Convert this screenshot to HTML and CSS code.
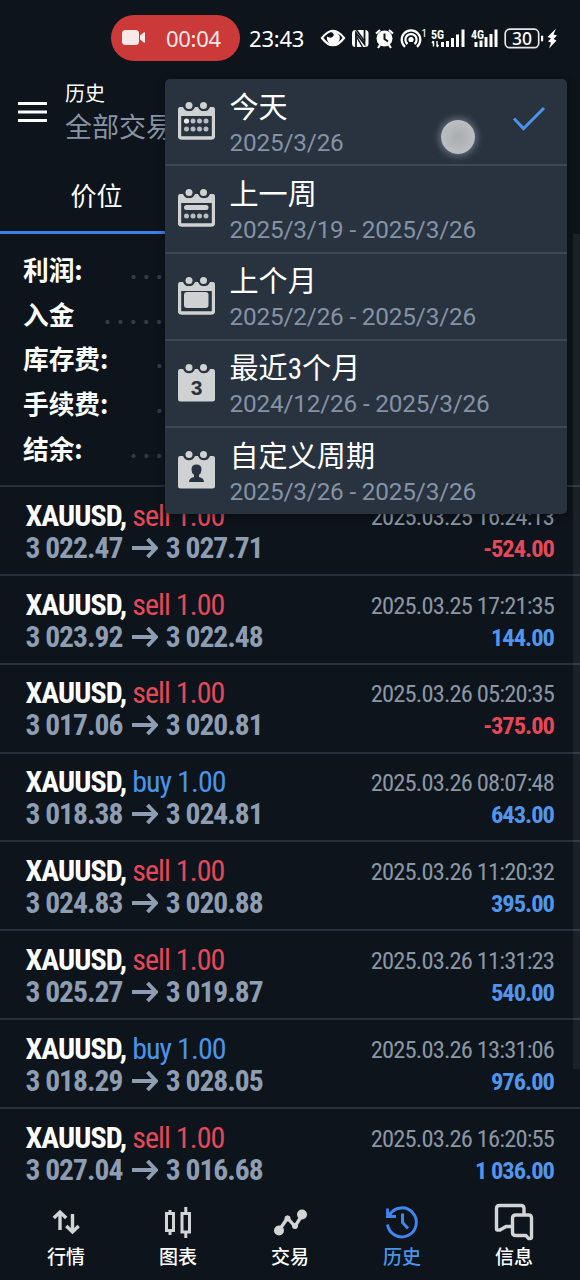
FILE: index.html
```
<!DOCTYPE html>
<html lang="zh-CN">
<head>
  <meta charset="UTF-8">
  <meta name="viewport" content="width=device-width, initial-scale=1.0">
  <title>历史</title>
  <link rel="stylesheet" href="styles.css">
</head>
<body>
  <svg class="defs" width="0" height="0">
    <symbol id="arrow" viewBox="0 0 26 20">
      <path d="M0 10H24M15.5 1L24 10L15.5 19" fill="none" stroke="currentColor" stroke-width="3.8"/>
    </symbol>
    <!-- calendar frame shared by the menu icons -->
    <symbol id="cal-top" viewBox="0 0 37 38">
      <path d="M2 5H5A6.4 6.4 0 0 0 17 5H20A6.4 6.4 0 0 0 32 5H35Q37 5 37 8V14H0V8Q0 5 2 5Z" fill="#d0d1d3"/>
      <circle cx="11" cy="3.6" r="3.5" fill="#d0d1d3"/>
      <circle cx="25.5" cy="3.6" r="3.5" fill="#d0d1d3"/>
    </symbol>
  </svg>

  <div class="screen">
    <div class="status">
      <div class="rec">
        <svg width="23" height="15" viewBox="0 0 23 15" fill="#fbe9e8"><rect width="17" height="15" rx="3.5"/><path d="M18 5.5L22 2.2Q23 2 23 3V12Q23 13 22 12.8L18 9.5Z"/></svg>
        <span>00:04</span>
      </div>
      <span class="clock">23:43</span>
      <svg class="tray" width="240" height="30" viewBox="0 0 240 30" fill="#fff">
        <!-- eye -->
        <path d="M2 15Q13 0.5 24 15Q13 29.5 2 15Z" fill="none" stroke="#fff" stroke-width="2.2"/>
        <path d="M13 8.5A6.5 6.5 0 1 1 7 13.5Q11 16 13.5 13Q14.5 10.5 11 9Z"/>
        <!-- nfc -->
        <rect x="32" y="7" width="16.5" height="17" rx="3.5"/>
        <path d="M36 24V10L44.5 21V7" fill="none" stroke="#0d141b" stroke-width="1.8"/>
        <path d="M36.5 7L44 17.500M36.500 13.500L42.500 24" stroke="#0d141b" stroke-width="1.5"/>
        <!-- alarm -->
        <circle cx="64.5" cy="15.5" r="8"/>
        <path d="M56 10.5L60 7M73 10.5L69 7M60 22L58 25M69 22L71 25" stroke="#fff" stroke-width="2.2"/>
        <path d="M64.5 10.5V16L68 18.5" fill="none" stroke="#0d141b" stroke-width="2"/>
        <!-- hotspot -->
        <circle cx="91" cy="16.500" r="2.6"/>
        <path d="M87.5 21A5.600 5.600 0 1 1 94.5 21M85 23.800A9.300 9.300 0 1 1 97 23.800" fill="none" stroke="#fff" stroke-width="2.3"/>
        <text class="t-small" x="101" y="14">1</text>
        <text class="t-net" x="111" y="16">5G</text>
        <path d="M113.5 18V23.5M112 20L113.5 18M117 18V23.5M118.5 22L117 24" fill="none" stroke="#fff" stroke-width="1.4"/>
        <path d="M122.5 24V19M127.5 24V18M132.5 24V15M137.5 24V11.5M143 24V6.5" stroke="#fff" stroke-width="3"/>
        <text class="t-net" x="151" y="16">4G</text>
        <path d="M156 24V19M161 24V17.5M166 24V14M171 24V11M176 24V6.5" stroke="#fff" stroke-width="3"/>
        <rect x="185.2" y="6.2" width="33.5" height="18.5" rx="4.5" fill="none" stroke="#e4e6e8" stroke-width="1.7"/>
        <rect x="221" y="12.5" width="2.2" height="6" rx="1"/>
        <text class="t-bat" x="202" y="21.5" text-anchor="middle">30</text>
        <path d="M236 5.5L227.5 14L231 15.2L228 18.5L231 19.5L229 25.5L236.5 17.5L233.5 16L237 12.5L233.5 11.5Z"/>
      </svg>
    </div>

    <div class="topbar">
      <svg width="29" height="20" viewBox="0 0 29 20"><path d="M0 1.5H29M0 10H29M0 18.5H29" stroke="#fff" stroke-width="3"/></svg>
      <div class="heading">
        <div class="title">历史</div>
        <div class="subtitle">全部交易品种</div>
      </div>
    </div>

    <div class="tabs">
      <div class="tab active">价位</div>
    </div>

    <div class="summary">
      <div class="sum"><b>利润:</b><i></i></div>
      <div class="sum short"><b>入金</b><i></i></div>
      <div class="sum long"><b>库存费:</b><i></i></div>
      <div class="sum long"><b>手续费:</b><i></i></div>
      <div class="sum"><b>结余:</b><i></i></div>
    </div>

    <div class="deals">
      <div class="deal">
        <div class="left">
          <div class="symbol"><b>XAUUSD,</b> <span class="sell">sell 1.00</span></div>
          <div class="price"><span>3 022.47</span><svg><use href="#arrow"/></svg><span>3 027.71</span></div>
        </div>
        <div class="right">
          <div class="date">2025.03.25 16:24:13</div>
          <div class="profit loss">-524.00</div>
        </div>
      </div>
      <div class="deal">
        <div class="left">
          <div class="symbol"><b>XAUUSD,</b> <span class="sell">sell 1.00</span></div>
          <div class="price"><span>3 023.92</span><svg><use href="#arrow"/></svg><span>3 022.48</span></div>
        </div>
        <div class="right">
          <div class="date">2025.03.25 17:21:35</div>
          <div class="profit">144.00</div>
        </div>
      </div>
      <div class="deal">
        <div class="left">
          <div class="symbol"><b>XAUUSD,</b> <span class="sell">sell 1.00</span></div>
          <div class="price"><span>3 017.06</span><svg><use href="#arrow"/></svg><span>3 020.81</span></div>
        </div>
        <div class="right">
          <div class="date">2025.03.26 05:20:35</div>
          <div class="profit loss">-375.00</div>
        </div>
      </div>
      <div class="deal">
        <div class="left">
          <div class="symbol"><b>XAUUSD,</b> <span class="buy">buy 1.00</span></div>
          <div class="price"><span>3 018.38</span><svg><use href="#arrow"/></svg><span>3 024.81</span></div>
        </div>
        <div class="right">
          <div class="date">2025.03.26 08:07:48</div>
          <div class="profit">643.00</div>
        </div>
      </div>
      <div class="deal">
        <div class="left">
          <div class="symbol"><b>XAUUSD,</b> <span class="sell">sell 1.00</span></div>
          <div class="price"><span>3 024.83</span><svg><use href="#arrow"/></svg><span>3 020.88</span></div>
        </div>
        <div class="right">
          <div class="date">2025.03.26 11:20:32</div>
          <div class="profit">395.00</div>
        </div>
      </div>
      <div class="deal">
        <div class="left">
          <div class="symbol"><b>XAUUSD,</b> <span class="sell">sell 1.00</span></div>
          <div class="price"><span>3 025.27</span><svg><use href="#arrow"/></svg><span>3 019.87</span></div>
        </div>
        <div class="right">
          <div class="date">2025.03.26 11:31:23</div>
          <div class="profit">540.00</div>
        </div>
      </div>
      <div class="deal">
        <div class="left">
          <div class="symbol"><b>XAUUSD,</b> <span class="buy">buy 1.00</span></div>
          <div class="price"><span>3 018.29</span><svg><use href="#arrow"/></svg><span>3 028.05</span></div>
        </div>
        <div class="right">
          <div class="date">2025.03.26 13:31:06</div>
          <div class="profit">976.00</div>
        </div>
      </div>
      <div class="deal">
        <div class="left">
          <div class="symbol"><b>XAUUSD,</b> <span class="sell">sell 1.00</span></div>
          <div class="price"><span>3 027.04</span><svg><use href="#arrow"/></svg><span>3 016.68</span></div>
        </div>
        <div class="right">
          <div class="date">2025.03.26 16:20:55</div>
          <div class="profit">1 036.00</div>
        </div>
      </div>
    </div>

    <div class="nav">
      <div class="nav-item">
        <svg width="40" height="40" viewBox="0 0 40 40" fill="none" stroke="#d3d4d6" stroke-width="3.4"><path d="M14 29V11.5M7.8 17L14 11L20.2 17M26.5 13V30.5M20.3 25L26.5 31L32.7 25"/></svg>
        <span>行情</span>
      </div>
      <div class="nav-item">
        <svg width="40" height="40" viewBox="0 0 40 40" fill="none" stroke="#d3d4d6" stroke-width="3"><path d="M8.5 12.5H15.5V29.5H8.5ZM12 9V13M12 29.5V34M24 12.5H31.5V31H24ZM27.8 6V13M27.8 31V37"/></svg>
        <span>图表</span>
      </div>
      <div class="nav-item">
        <svg width="40" height="40" viewBox="0 0 40 40"><path d="M9 29.5L17.5 17L25 25.5L32.5 13.5" fill="none" stroke="#d3d4d6" stroke-width="3.4"/><g fill="#d3d4d6"><circle cx="9" cy="29.5" r="5"/><circle cx="17.5" cy="17.5" r="3"/><circle cx="25" cy="25" r="3"/><circle cx="32" cy="13.5" r="5"/></g></svg>
        <span>交易</span>
      </div>
      <div class="nav-item active">
        <svg width="40" height="40" viewBox="0 0 40 40" fill="none" stroke="#3f86ef" stroke-width="3"><path d="M5.5 23.5A14.500 14.500 0 1 0 8 13M20.5 12.5V21.5L26 27.5"/><path d="M5.500 7.500V15.500H14" stroke-width="2.8"/><path d="M5 9L12 15.500H5Z" fill="#3f86ef" stroke="none"/></svg>
        <span>历史</span>
      </div>
      <div class="nav-item">
        <svg width="40" height="40" viewBox="0 0 40 40" fill="none" stroke="#d3d4d6" stroke-width="3.4" stroke-linejoin="round"><path d="M17 25.5H12L6 29H3.5Q2.5 29 2.5 27.5V7.5Q2.5 4.5 5.5 4.5H27Q30 4.5 30 7.5V14"/><path d="M22 14H34.5Q37.5 14 37.5 17V36Q37.5 37.5 36 37.5H34.5L32 34.5H22Q18.5 34.5 18.5 31.5V17Q18.5 14 22 14Z"/></svg>
        <span>信息</span>
      </div>
    </div>

    <div class="scrollbar"></div>

    <div class="menu">
      <div class="option">
        <svg class="cal" viewBox="0 0 37 38"><use href="#cal-top"/><path d="M1.5 11V34Q1.5 36 4 36H33Q35.5 36 35.5 34V11Z" fill="none" stroke="#d0d1d3" stroke-width="3.4"/><g fill="#b9bdc2"><circle cx="8.5" cy="19" r="2.6" fill="#e8e8e8"/><circle cx="15" cy="19" r="2.5"/><circle cx="21.5" cy="19" r="2.5"/><circle cx="28" cy="19" r="2.5"/><circle cx="8.5" cy="27" r="2.5"/><circle cx="15" cy="27" r="2.5"/><circle cx="21.5" cy="27" r="2.5"/><circle cx="28" cy="27" r="2.5"/></g></svg>
        <div>
          <div class="name">今天</div>
          <div class="range">2025/3/26</div>
        </div>
        <svg class="check" width="34" height="25" viewBox="0 0 34 25"><path d="M2 12.5L11.5 22.5L32 2" fill="none" stroke="#4b93ea" stroke-width="3"/></svg>
      </div>
      <div class="option">
        <svg class="cal" viewBox="0 0 37 38"><use href="#cal-top"/><path d="M1.5 11V34Q1.5 36 4 36H33Q35.5 36 35.5 34V11Z" fill="none" stroke="#d0d1d3" stroke-width="3.4"/><rect x="6" y="16" width="24.5" height="5" rx="2.5" fill="#d0d1d3"/><g fill="#b9bdc2"><circle cx="8.5" cy="27" r="2.5"/><circle cx="15" cy="27" r="2.5"/><circle cx="21.5" cy="27" r="2.5"/><circle cx="28" cy="27" r="2.5"/></g></svg>
        <div>
          <div class="name">上一周</div>
          <div class="range">2025/3/19 - 2025/3/26</div>
        </div>
      </div>
      <div class="option">
        <svg class="cal" viewBox="0 0 37 38"><use href="#cal-top"/><path d="M1.5 11V34Q1.5 36 4 36H33Q35.5 36 35.5 34V11Z" fill="none" stroke="#d0d1d3" stroke-width="3.4"/><rect x="6" y="15" width="24.5" height="16" rx="3" fill="#d0d1d3"/></svg>
        <div>
          <div class="name">上个月</div>
          <div class="range">2025/2/26 - 2025/3/26</div>
        </div>
      </div>
      <div class="option">
        <svg class="cal" viewBox="0 0 37 38"><use href="#cal-top"/><path d="M0 13H37V35Q37 37.5 34.5 37.5H2.5Q0 37.5 0 35Z" fill="#d0d1d3"/><text class="t-cal" x="18.5" y="31" text-anchor="middle">3</text></svg>
        <div>
          <div class="name">最近<span class="num">3</span>个月</div>
          <div class="range">2024/12/26 - 2025/3/26</div>
        </div>
      </div>
      <div class="option">
        <svg class="cal" viewBox="0 0 37 38"><use href="#cal-top"/><path d="M0 13H37V35Q37 37.5 34.5 37.5H2.5Q0 37.5 0 35Z" fill="#d0d1d3"/><path d="M18.5 13.5Q23.5 13.5 23.5 18.5Q23.5 22 21 24V26Q26 27 26 31H11Q11 27 16 26V24Q13.5 22 13.5 18.5Q13.5 13.5 18.5 13.5Z" fill="#28333f"/></svg>
        <div>
          <div class="name">自定义周期</div>
          <div class="range">2025/3/26 - 2025/3/26</div>
        </div>
      </div>
      <div class="touch"></div>
    </div>
  </div>
</body>
</html>
```
FILE: styles.css
```
* {
  box-sizing: border-box;
}
body {
  margin: 0;
  background-color: #0d141b;
  color: #fff;
  font-family: Roboto, "Noto Sans CJK SC", sans-serif;
}
.defs {
  position: absolute;
}
.screen {
  position: relative;
  width: 580px;
  height: 1280px;
  overflow: hidden;
  display: flex;
  flex-direction: column;
}

/* status bar */
.status {
  height: 75px;
  display: flex;
  align-items: center;
  padding-left: 111px;
  font-family: "Noto Sans", sans-serif;
  font-size: 22px;
}
.rec {
  width: 129px;
  height: 46px;
  border-radius: 23px;
  background-color: #cb3939;
  color: #fbe9e8;
  display: flex;
  align-items: center;
  padding-left: 11px;
  gap: 21px;
}
.rec span {
  letter-spacing: -0.3px;
}
.clock {
  margin-left: 9px;
  width: 61px;
  letter-spacing: -0.2px;
}
.tray {
  margin-left: 10px;
  flex: none;
}
.t-small {
  font-size: 11px;
}
.t-net {
  font: bold 12px Roboto, sans-serif;
  font-stretch: condensed;
}
.t-bat {
  font-size: 17.5px;
  font-weight: 500;
}
.t-cal {
  font: bold 21px "Liberation Sans", sans-serif;
  fill: #28333f;
}

/* header */
.topbar {
  height: 85px;
  display: flex;
  padding: 7px 0 0 18px;
  gap: 18px;
}
.topbar svg {
  margin-top: 19.5px;
}
.title {
  font-size: 20px;
  line-height: 25px;
}
.subtitle {
  font-size: 27px;
  line-height: 42px;
  color: #8793a5;
}
.tabs {
  height: 74px;
  display: flex;
}
.tab {
  width: 193px;
  padding-top: 13px;
  font-size: 26px;
  line-height: 48px;
  text-align: center;
  border-bottom: 3px solid #3f80e6;
}

/* totals with dotted leaders */
.summary {
  height: 251px;
  padding: 14px 20px 0 23px;
  font-family: "Noto Sans CJK SC", sans-serif;
}
.sum {
  display: flex;
  height: 44.7px;
}
.sum b {
  width: 104px;
  font-size: 25.7px;
  line-height: 41px;
}
.sum.short b {
  width: 78px;
}
.sum.long b {
  width: 130px;
}
.sum i {
  flex: 1;
  background: radial-gradient(circle at 6.5px 29px, #333b45 1.8px, transparent 2.4px) 0 0 / 12.9px 100% repeat-x;
}

/* deals list */
.deals {
  height: 712px;
}
.deal {
  height: 88.85px;
  border-top: 2px solid #28303b;
  display: flex;
  justify-content: space-between;
  padding: 12.8px 26px 0 25.5px;
  font-family: "Roboto Condensed", Roboto, sans-serif;
  font-stretch: condensed;
  white-space: nowrap;
}
.symbol {
  font-size: 30px;
  line-height: 32px;
  letter-spacing: -0.95px;
}
.price {
  display: flex;
  align-items: center;
  font-size: 29.5px;
  line-height: 32px;
  font-weight: bold;
  letter-spacing: -1px;
  color: #8f9db3;
}
.price svg {
  width: 26px;
  height: 20px;
  margin: 0 8px 0 9.5px;
}
.right {
  text-align: right;
}
.date {
  font-size: 24.5px;
  line-height: 34px;
  letter-spacing: -0.85px;
  color: #8b96a5;
}
.profit {
  font-size: 24.5px;
  line-height: 30px;
  font-weight: bold;
  letter-spacing: -1px;
  color: #5296ec;
}
.sell,
.loss {
  color: #e54859;
}
.buy {
  color: #4b93ea;
}

/* bottom navigation */
.nav {
  flex: 1;
  display: flex;
  padding: 4px 10px 0;
}
.nav-item {
  flex: 1;
  display: flex;
  flex-direction: column;
  align-items: center;
  font-family: "Noto Sans CJK SC", sans-serif;
  font-size: 19px;
  line-height: 30px;
  font-weight: 500;
}
.nav-item.active {
  color: #4b93ea;
}

.scrollbar {
  position: absolute;
  left: 573px;
  top: 234px;
  width: 7px;
  height: 835px;
  background-color: rgba(255,255,255,0.06);
}

/* period menu */
.menu {
  position: absolute;
  left: 165px;
  top: 79px;
  width: 402px;
  height: 435px;
  border-radius: 5px;
  background-color: #28333f;
  box-shadow: 0 2px 8px rgba(0,0,0,0.4);
}
.option {
  height: 87.3px;
  display: flex;
  padding: 10.5px 0 0 13px;
  border-bottom: 2px solid #3d4856;
}
.option:nth-child(5) {
  border-bottom: none;
}
.cal {
  width: 37px;
  height: 38px;
  margin: 12.5px 14.5px 0 0;
}
.name {
  font-size: 29.1px;
  line-height: 37px;
}
.num {
  font-stretch: condensed;
}
.range {
  font-size: 24.3px;
  line-height: 32px;
  letter-spacing: -0.17px;
  color: #8592a6;
}
.check {
  margin: 16px 21px 0 auto;
}
.touch {
  position: absolute;
  left: 275.5px;
  top: 41px;
  width: 34px;
  height: 34px;
  border-radius: 50%;
  background: radial-gradient(circle, #a9adae, #c4c6ca);
  box-shadow: 0 0 7px 2px rgba(150,150,175,0.6);
}
```
